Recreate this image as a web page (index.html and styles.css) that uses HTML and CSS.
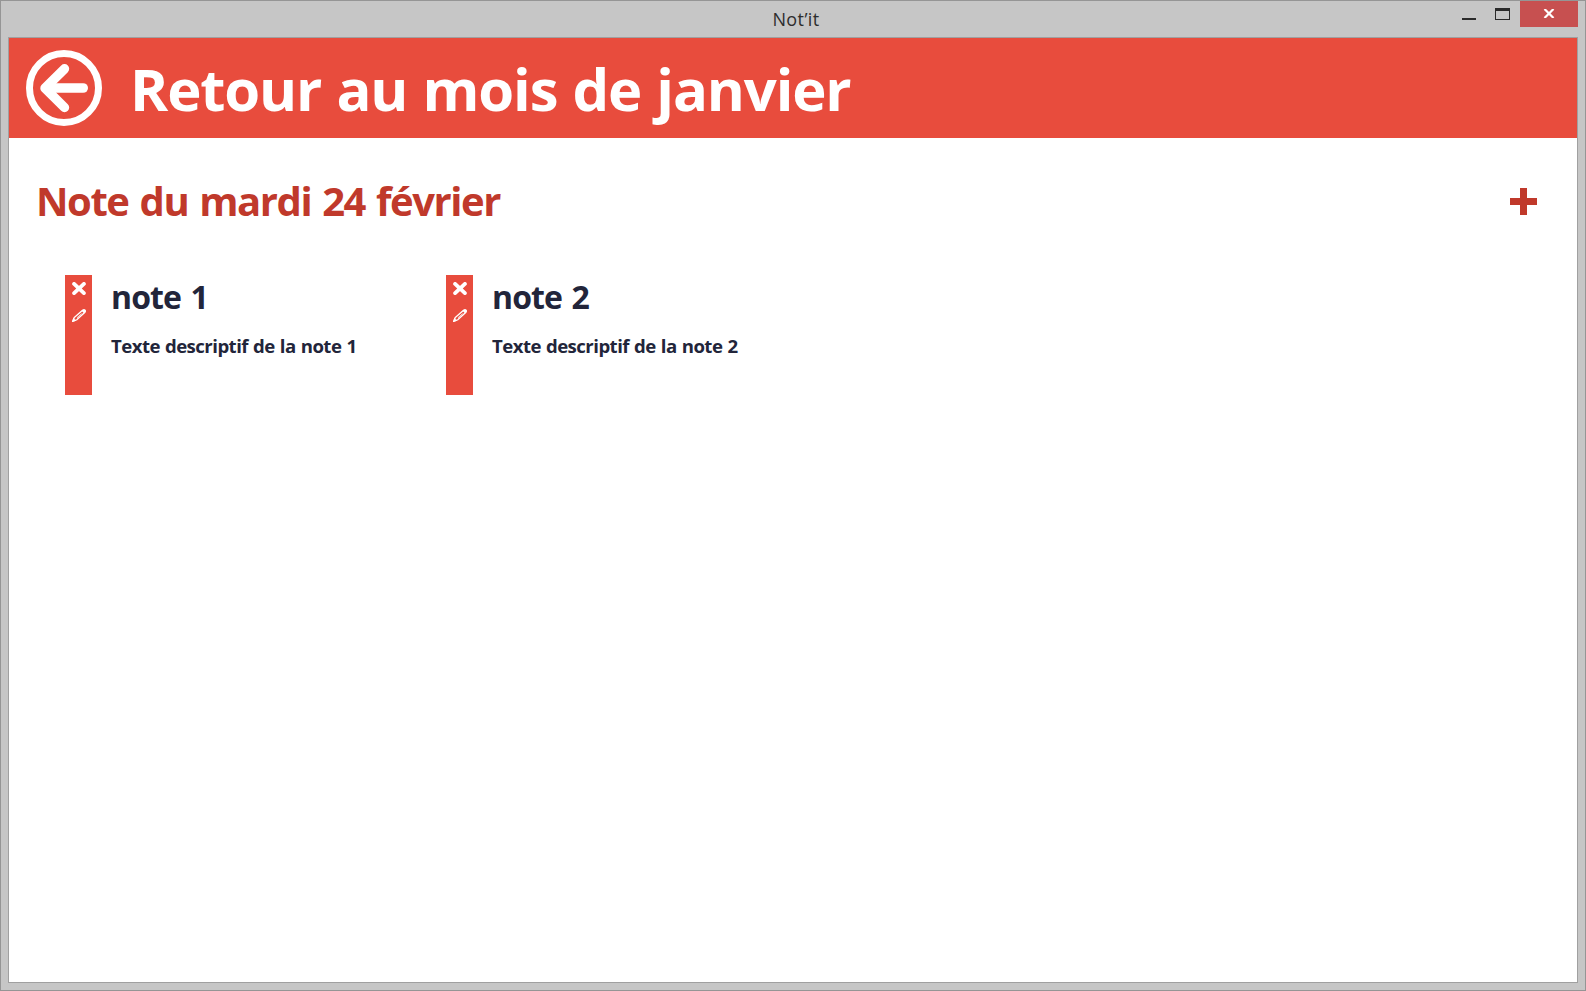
FILE: index.html
```html
<!DOCTYPE html>
<html lang="fr">
<head>
<meta charset="utf-8">
<title>Not’it</title>
<link rel="stylesheet" href="styles.css">
</head>
<body>
<div class="window">
  <header class="titlebar">
    <span class="app-name">Not’it</span>
    <div class="controls">
      <svg class="minimize" width="14" height="2"><rect width="14" height="2" fill="#2a2a2a"/></svg>
      <svg class="maximize" width="15" height="12"><path d="M0 0H15V12H0ZM1 3V11H14V3Z" fill="#2a2a2a" fill-rule="evenodd"/></svg>
      <div class="close"><svg width="12" height="9" viewBox="0 0 12 9"><path d="M1.5 0L10.5 9M10.5 0L1.5 9" stroke="#fff" stroke-width="2.2"/></svg></div>
    </div>
  </header>
  <main class="content">
    <div class="banner">
      <svg class="back" width="76" height="76" viewBox="0 0 76 76" fill="none" stroke="#fff">
        <circle cx="38" cy="38" r="34.5" stroke-width="7"/>
        <path d="M38.5 18.8L19 38.2L38.5 57.5" stroke-width="9.4" stroke-linecap="round" stroke-linejoin="round"/>
        <path d="M21 38H57.2" stroke-width="9.6" stroke-linecap="round"/>
        <path d="M19 38.2L30 29V47Z" fill="#fff" stroke="none"/>
      </svg>
      <h1 class="banner-title">Retour au mois de janvier</h1>
    </div>
    <div class="day">
      <h2 class="day-title">Note du mardi 24 février</h2>
      <svg class="add" width="27" height="27"><path d="M10 0H17V10H27V17H17V27H10V17H0V10H10Z" fill="#c0392b"/></svg>
    </div>
    <div class="notes">
      <article class="note">
        <div class="tools">
          <svg width="14" height="13" viewBox="0 0 14 13"><path d="M2.1 1.9L11.9 11.1M11.9 1.9L2.1 11.1" stroke="#fff" stroke-width="3.8" stroke-linecap="round"/></svg>
          <svg width="14" height="13" viewBox="0 0 14 14" preserveAspectRatio="none"><path d="M.8 13.2L2.2 9.2L10 1.8Q11.5 .3 12.8 1.4Q13.8 2.6 12.4 4L4.8 11.6Z" fill="none" stroke="#fff" stroke-width="1.4"/><path d="M9.5 2L11.2 .5Q13 0 13.7 1.2Q14.2 2.5 13.2 3.6L12 4.7ZM0 14L1.3 9.7L4.3 12.6Z" fill="#fff"/><path d="M5 9.5L9.6 5" stroke="#fff" stroke-width=".8"/></svg>
        </div>
        <div class="note-body">
          <h3 class="note-title">note 1</h3>
          <p class="note-text">Texte descriptif de la note 1</p>
        </div>
      </article>
      <article class="note">
        <div class="tools">
          <svg width="14" height="13" viewBox="0 0 14 13"><path d="M2.1 1.9L11.9 11.1M11.9 1.9L2.1 11.1" stroke="#fff" stroke-width="3.8" stroke-linecap="round"/></svg>
          <svg width="14" height="13" viewBox="0 0 14 14" preserveAspectRatio="none"><path d="M.8 13.2L2.2 9.2L10 1.8Q11.5 .3 12.8 1.4Q13.8 2.6 12.4 4L4.8 11.6Z" fill="none" stroke="#fff" stroke-width="1.4"/><path d="M9.5 2L11.2 .5Q13 0 13.7 1.2Q14.2 2.5 13.2 3.6L12 4.7ZM0 14L1.3 9.7L4.3 12.6Z" fill="#fff"/><path d="M5 9.5L9.6 5" stroke="#fff" stroke-width=".8"/></svg>
        </div>
        <div class="note-body">
          <h3 class="note-title">note 2</h3>
          <p class="note-text">Texte descriptif de la note 2</p>
        </div>
      </article>
    </div>
  </main>
</div>
</body>
</html>
```
FILE: styles.css
```css
* { box-sizing: border-box; margin: 0; padding: 0; }
body { font-family: "Open Sans", "Noto Sans", sans-serif; overflow: hidden; }
svg { display: block; flex: none; }
.window {
  width: 1586px; height: 991px; display: flex; flex-direction: column;
  border: 1px solid #959595; background: #c6c6c6; padding: 0 7px 7px;
}
.titlebar { height: 36px; flex: none; display: grid; grid-template-columns: 1fr auto 1fr; }
.app-name { grid-column: 2; font-size: 18px; line-height: 36px; letter-spacing: 0.4px; color: #2d2d2d; padding-left: 6px; white-space: nowrap; }
.controls { grid-column: 3; display: flex; justify-content: flex-end; align-items: flex-start; }
.minimize { margin: 17px 19px 0 0; }
.maximize { margin: 7px 10px 0 0; }
.close { width: 58px; height: 26px; background: #c75050; display: flex; justify-content: center; padding: 8px 1px 0 0; }
.content { flex: 1; background: #fff; border: 1px solid #a0a0a0; }
.banner { height: 100px; background: #e84c3d; display: flex; padding-left: 17px; }
.back { margin: 12px 28px 0 0; }
.banner-title { font-size: 58px; line-height: 102px; letter-spacing: -1.13px; word-spacing: 1.2px; color: #fff; white-space: nowrap; }
.day { display: flex; justify-content: space-between; padding: 38px 40px 0 27px; }
.day-title { font-size: 40px; line-height: 50px; letter-spacing: -1.43px; word-spacing: 2px; color: #c0392b; white-space: nowrap; }
.add { margin-top: 12px; }
.notes { display: flex; padding: 49px 0 0 56px; }
.note { width: 381px; height: 120px; display: flex; }
.tools { width: 27px; background: #e84c3d; display: flex; flex-direction: column; align-items: center; gap: 14px; padding-top: 7px; }
.note-body { padding-left: 19px; color: #22253a; white-space: nowrap; }
.note-title { font-size: 32px; line-height: 44px; letter-spacing: -0.9px; word-spacing: 2px; }
.note-text { font-size: 18.6px; line-height: 24px; letter-spacing: -0.54px; word-spacing: 0.8px; margin-top: 15px; font-weight: 700; }
```
